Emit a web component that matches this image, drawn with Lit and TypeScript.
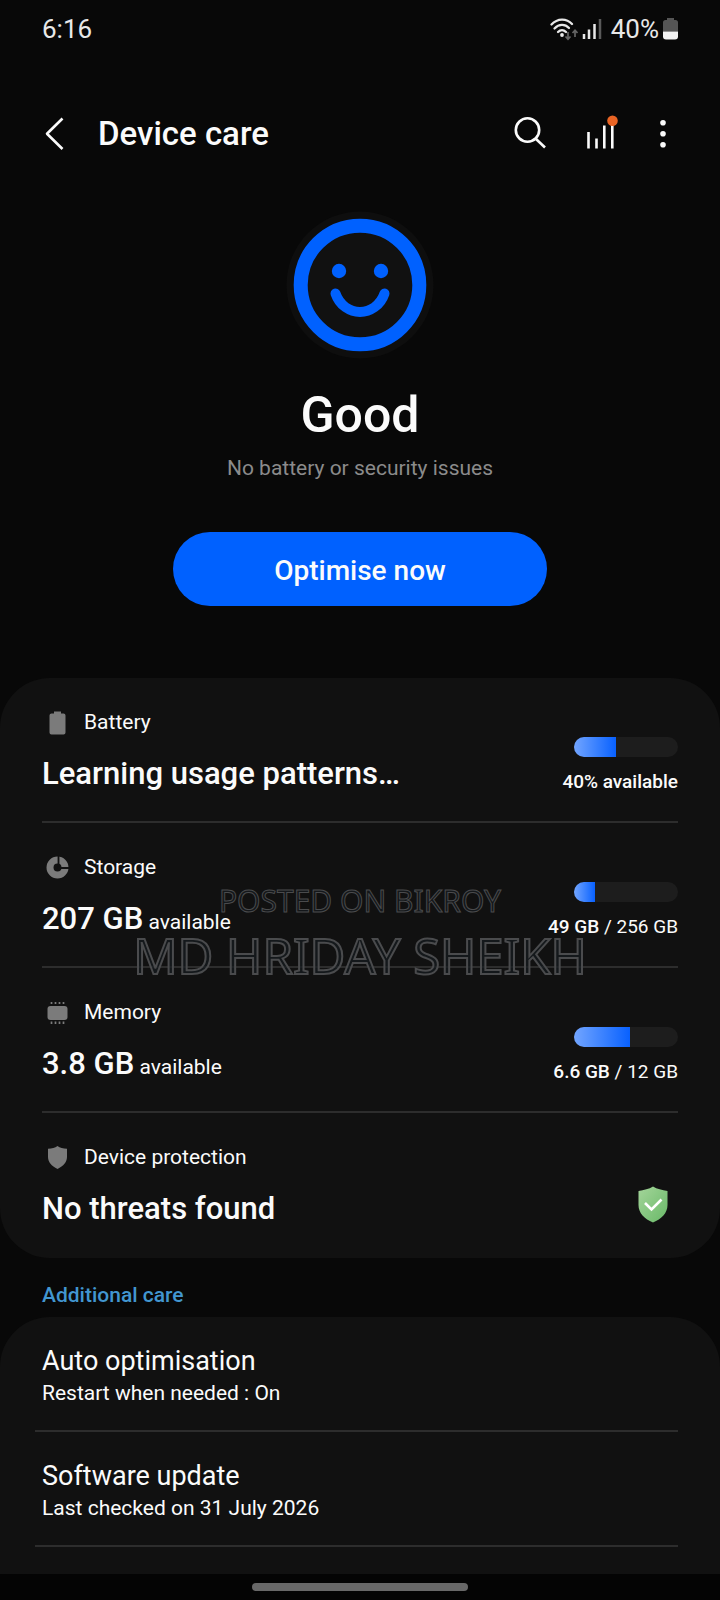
import { LitElement, html, css, svg, nothing } from "lit";
import type { TemplateResult } from "lit";
import { customElement, property } from "lit/decorators.js";

interface CareItem {
  label: string;
  value: string;
  unit?: string;
  icon: TemplateResult;
  percent?: number;
  usedStrong?: string;
  usedRest?: string;
}

const batteryIcon = svg`<path d="M12 3.500h7v2h2.500a2 2 0 0 1 2 2v17a2 2 0 0 1-2 2h-12a2 2 0 0 1-2-2v-17a2 2 0 0 1 2-2h2.500z"/>`;

const storageIcon = svg`
  <circle cx="15.500" cy="14.500" r="7.500" fill="none" stroke="currentColor" stroke-width="7"/>
  <path d="M16.500 2.500v11M15.500 15h12" fill="none" stroke="#111" stroke-width="1.800"/>`;

const memoryIcon = svg`
  <rect x="5.500" y="8" width="20" height="14" rx="3"/>
  <path d="M9.500 4v2M13.500 4v2M17.500 4v2M21.500 4v2M9.500 23.500v2.500M13.500 23.500v2.500M17.500 23.500v2.500M21.500 23.500v2.500" fill="none" stroke="currentColor" stroke-width="1.700"/>`;

const shieldIcon = svg`<path d="M15.500 3c2.500 1.800 5.500 2.500 9.500 2.800v8.200c0 5-3.500 9-9.500 12-6-3-9.500-7-9.500-12v-8.200c4-.3 7-1 9.500-2.800z"/>`;

@customElement("care-row")
export class CareRow extends LitElement {
  @property({ attribute: false }) item!: CareItem;

  static styles = css`
    :host {
      display: block;
      border-bottom: 2px solid #2d2d2d;
    }
    :host([last]) {
      border-bottom-color: transparent;
    }
    .row {
      display: flex;
      align-items: flex-end;
      justify-content: space-between;
      padding: 30px 0 27px;
      color: #fbfbfb;
      text-decoration: none;
    }
    .label {
      display: flex;
      align-items: center;
      gap: 12px;
      font-size: 21px;
      line-height: 28px;
    }
    .icon {
      width: 30px;
      height: 28px;
      color: #7b7b7b;
      fill: currentColor;
    }
    .value {
      margin-top: 18px;
      font-size: 31px;
      line-height: 40px;
      font-weight: 500;
    }
    .unit {
      font-size: 21px;
      line-height: 24px;
      font-weight: 400;
    }
    .side {
      display: flex;
      flex-direction: column;
      align-items: flex-end;
      gap: 13px;
      font-size: 19px;
      line-height: 24px;
    }
    .strong {
      font-weight: 500;
    }
    .track {
      width: 104px;
      height: 20px;
      border-radius: 10px;
      background: #1d1d1d;
      overflow: hidden;
    }
    .fill {
      height: 100%;
      background: linear-gradient(90deg, #72a5ff, #0861ff);
    }
    .safe {
      display: block;
      width: 50px;
      height: 48px;
    }
  `;

  render() {
    const i = this.item;
    return html`
      <a class="row" href="#">
        <div>
          <div class="label">
            <svg class="icon" viewBox="0 0 30 28" aria-hidden="true">${i.icon}</svg>
            <span>${i.label}</span>
          </div>
          <div class="value">${i.value}${i.unit ? html`<span class="unit"> ${i.unit}</span>` : nothing}</div>
        </div>
        ${i.percent !== undefined
          ? html`<div class="side">
              <div class="track" role="meter" aria-label=${i.label} aria-valuemin="0" aria-valuemax="100" aria-valuenow=${i.percent}>
                <div class="fill" style="width:${i.percent}%"></div>
              </div>
              <div><span class="strong">${i.usedStrong}</span>${i.usedRest ?? nothing}</div>
            </div>`
          : html`<svg class="safe" viewBox="0 0 50 48" role="img" aria-label="Protected">
              <defs>
                <linearGradient id="leaf" x1="0" y1="0" x2="1" y2="1">
                  <stop offset="0" stop-color="#a4d59a" />
                  <stop offset="1" stop-color="#69b968" />
                </linearGradient>
              </defs>
              <path d="M25 5.500c4 2.600 9 3.500 14.500 4.500v14c0 8-6 14-14.500 17.500-8.500-3.500-14.500-9.500-14.500-17.500v-14c5.500-1 10.500-1.900 14.500-4.500z" fill="url(#leaf)" />
              <path d="M17 22l6.500 6.500 10-10" fill="none" stroke="#fff" stroke-width="2.600" />
            </svg>`}
      </a>
    `;
  }
}

@customElement("app-root")
export class AppRoot extends LitElement {
  static styles = css`
    :host {
      display: flex;
      flex-direction: column;
      min-height: 100vh;
      background: #080808;
      color: #fbfbfb;
      font-family: Roboto, "Liberation Sans", sans-serif;
    }
    .status {
      display: flex;
      align-items: center;
      justify-content: space-between;
      padding: 13px 42px 0;
      font-size: 26px;
      line-height: 32px;
      color: #e8e8e8;
    }
    .indicators {
      display: flex;
      align-items: center;
      gap: 4px;
    }
    .level {
      padding-left: 5px;
    }
    .glyph {
      display: block;
      height: 24px;
    }
    .bar {
      display: flex;
      align-items: center;
      gap: 32px;
      padding: 69px 42px 0;
    }
    .title {
      flex: 1;
      display: flex;
      align-items: center;
      gap: 24px;
    }
    h1,
    h2,
    h3,
    p {
      margin: 0;
    }
    h1 {
      font-size: 33px;
      line-height: 40px;
      font-weight: 500;
    }
    .tool {
      display: block;
      padding: 0;
      border: 0;
      background: none;
      color: #fbfbfb;
    }
    .tool svg {
      display: block;
      height: 40px;
      fill: none;
      stroke: currentColor;
      stroke-width: 2.6;
    }
    .hero {
      display: flex;
      flex-direction: column;
      align-items: center;
      padding: 57px 42px 72px;
    }
    .face {
      width: 148px;
      height: 148px;
    }
    h2 {
      margin-top: 26px;
      font-size: 50px;
      line-height: 60px;
      font-weight: 500;
    }
    .note {
      margin-top: 9px;
      font-size: 21px;
      line-height: 28px;
      color: #8b8b8b;
    }
    .optimise {
      width: 374px;
      max-width: 100%;
      height: 74px;
      margin-top: 50px;
      padding: 3px 24px 0;
      border: 0;
      border-radius: 37px;
      background: #0061ff;
      color: #fbfbfb;
      font: 500 28px/36px Roboto, "Liberation Sans", sans-serif;
    }
    .card {
      padding: 0 42px;
      border-radius: 50px;
      background: #111;
    }
    .summary {
      position: relative;
    }
    .stamp {
      position: absolute;
      inset: 201px 0 auto;
      text-align: center;
      font-family: "Noto Sans", sans-serif;
      color: rgba(22, 27, 31, 0.7);
      -webkit-text-stroke: 1px #4a4b4d;
      pointer-events: none;
    }
    .stamp-small {
      font-size: 30px;
      line-height: 44px;
    }
    .stamp-large {
      font-size: 49px;
      line-height: 64px;
      -webkit-text-stroke-width: 2px;
    }
    h3 {
      padding: 23px 42px 8px;
      font-size: 21px;
      line-height: 28px;
      font-weight: 500;
      color: #4296d0;
    }
    .more {
      flex: 1;
      padding: 0 42px 0 35px;
      border-radius: 50px 50px 0 0;
    }
    .option {
      display: block;
      padding: 27px 7px 23px;
      border-bottom: 2px solid #2d2d2d;
      color: #fbfbfb;
      text-decoration: none;
    }
    .option-title {
      font-size: 27px;
      line-height: 34px;
    }
    .option-note {
      margin-top: 1px;
      font-size: 21px;
      line-height: 28px;
    }
    .nav {
      display: flex;
      justify-content: center;
      padding: 9px 0;
      background: #040404;
    }
    .handle {
      width: 30%;
      height: 8px;
      border-radius: 4px;
      background: #686868;
    }
  `;

  private items: CareItem[] = [
    { label: "Battery", value: "Learning usage patterns…", icon: batteryIcon, percent: 40, usedStrong: "40% available" },
    { label: "Storage", value: "207 GB", unit: "available", icon: storageIcon, percent: 20, usedStrong: "49 GB", usedRest: " / 256 GB" },
    { label: "Memory", value: "3.8 GB", unit: "available", icon: memoryIcon, percent: 54, usedStrong: "6.6 GB", usedRest: " / 12 GB" },
    { label: "Device protection", value: "No threats found", icon: shieldIcon },
  ];

  private options = [
    { title: "Auto optimisation", note: "Restart when needed : On" },
    { title: "Software update", note: "Last checked on 31 July 2026" },
  ];

  render() {
    return html`
      <div class="status">
        <span>6:16</span>
        <div class="indicators">
          <svg class="glyph" width="28" viewBox="0 0 28 24" fill="none" aria-label="Wi-Fi" role="img">
            <g stroke="#e8e8e8" stroke-width="2.300" stroke-linecap="round">
              <path d="M1.500 7.500C7.500 1 16.500 1 22 7" />
              <path d="M4.500 11.500C9 6.800 15 6.800 19 11" />
              <path d="M8 15C10.500 12.500 13.500 12.500 16 15" />
            </g>
            <circle cx="12" cy="18" r="1.900" fill="#e8e8e8" />
            <path d="M18 15v7M15.500 19.500l2.500 2.700 2.500-2.700M25 20v-6.500M22.500 16l2.500-2.700 2.500 2.700" stroke="#646464" stroke-width="1.700" />
          </svg>
          <svg class="glyph" width="20" viewBox="0 0 20 24" fill="none" stroke="#e8e8e8" stroke-width="2.500" aria-label="Signal" role="img">
            <path d="M2 17v5M7 12.500v9.500M12.500 7v15" />
            <path d="M18 2v20" stroke="#5a5a5a" />
          </svg>
          <span class="level">40%</span>
          <svg class="glyph" width="15" viewBox="0 0 15 24" aria-label="Battery" role="img">
            <path d="M4 1h7v2h1.500a2.500 2.500 0 0 1 2.500 2.500v9h-15v-9a2.500 2.500 0 0 1 2.500-2.500h1.500z" fill="#555" />
            <path d="M0 14.500h15v5a3 3 0 0 1-3 3h-9a3 3 0 0 1-3-3z" fill="#f2f2f2" />
          </svg>
        </div>
      </div>

      <header class="bar">
        <div class="title">
          <button class="tool" aria-label="Back">
            <svg width="32" viewBox="0 0 32 40"><path d="M20.500 4.500l-15.500 15.200 15.500 15.300" stroke-linejoin="round" /></svg>
          </button>
          <h1>Device care</h1>
        </div>
        <button class="tool" aria-label="Search">
          <svg width="40" viewBox="0 0 40 40"><circle cx="19.500" cy="16" r="11.700" /><path d="M27.500 24.500l9.500 9" /></svg>
        </button>
        <button class="tool" aria-label="Usage">
          <svg width="40" viewBox="0 0 40 40">
            <path d="M8.500 18v16.500M16.500 24.500v10M24.300 11.500v23M32.300 7v27.500" />
            <circle cx="32.500" cy="6.800" r="5.300" fill="#e96424" stroke="none" />
          </svg>
        </button>
        <button class="tool" aria-label="More options">
          <svg width="26" viewBox="0 0 26 40">
            <g fill="currentColor" stroke="none">
              <circle cx="11" cy="8.700" r="2.800" /><circle cx="11" cy="19.700" r="2.800" /><circle cx="11" cy="30.700" r="2.800" />
            </g>
          </svg>
        </button>
      </header>

      <section class="hero">
        <svg class="face" viewBox="0 0 148 148" role="img" aria-label="Smiling face">
          <circle cx="74" cy="74" r="73.500" fill="#0e0e0e" />
          <circle cx="74" cy="74" r="59.300" fill="#111" stroke="#0061ff" stroke-width="14" />
          <circle cx="53" cy="60" r="7.200" fill="#0061ff" />
          <circle cx="95" cy="60" r="7.200" fill="#0061ff" />
          <path d="M49.500 82.500C58 107 90 107 98.500 82.500" fill="none" stroke="#0061ff" stroke-width="10" stroke-linecap="round" />
        </svg>
        <h2>Good</h2>
        <p class="note">No battery or security issues</p>
        <button class="optimise">Optimise now</button>
      </section>

      <section class="card summary">
        ${this.items.map((item, n) => html`<care-row .item=${item} ?last=${n === this.items.length - 1}></care-row>`)}
        <div class="stamp">
          <div class="stamp-small">POSTED ON BIKROY</div>
          <div class="stamp-large">MD HRIDAY SHEIKH</div>
        </div>
      </section>

      <h3>Additional care</h3>
      <section class="card more">
        ${this.options.map(
          (o) => html`<a class="option" href="#">
            <div class="option-title">${o.title}</div>
            <div class="option-note">${o.note}</div>
          </a>`
        )}
      </section>
      <div class="nav"><div class="handle"></div></div>
    `;
  }
}
